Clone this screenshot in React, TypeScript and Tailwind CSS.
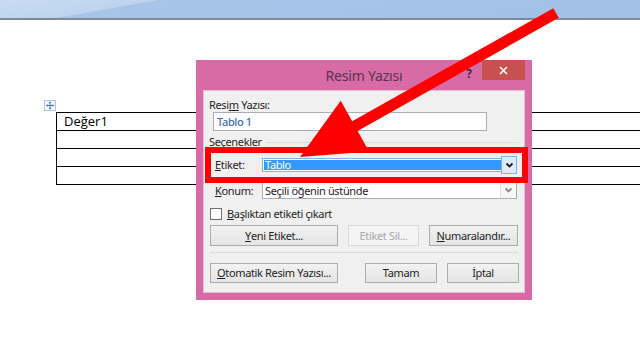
import React from "react";

const Btn = ({
  children,
  w,
  disabled,
  className = "",
}: {
  children: React.ReactNode;
  w: string;
  disabled?: boolean;
  className?: string;
}) => (
  <div
    className={`${w} ${className} flex h-full items-center justify-center border text-[11px] ${
      disabled
        ? "border-[#d9d9d9] bg-[#f4f4f4] text-[#a6a6a6]"
        : "border-[#acacac] bg-[linear-gradient(#f2f2f2,#e4e4e4)] text-[#1e1e1e]"
    }`}
  >
    {children}
  </div>
);

const Chevron = ({ color }: { color: string }) => (
  <svg width="9" height="7" viewBox="0 0 9 7">
    <polyline points="1.5,1.5 4.5,4.5 7.5,1.5" fill="none" stroke={color} strokeWidth="1.8" />
  </svg>
);

const MoveIcon = () => (
  <svg width="12" height="11" viewBox="0 0 12 11" className="block">
    <rect x="0.5" y="0.5" width="11" height="10" fill="#f4f7fb" stroke="#b9c4d2" />
    <path d="M6 2v7M2.5 5.5h7" stroke="#3f78c9" strokeWidth="1" />
    <path d="M6 1.5l-1.5 1.5h3zM6 9.5l-1.5-1.5h3zM2 5.5l1.5-1.5v3zM10 5.5l-1.5-1.5v3z" fill="#3f78c9" />
  </svg>
);

const DocumentTable = () => (
  <div className="pl-[44px] pt-[80px]">
    <MoveIcon />
    <div className="ml-[12px] mt-px border-l border-t border-black font-['Open_Sans',sans-serif]">
      <div className="flex h-[18px] items-center border-b border-black pl-[7px] text-[13px] text-black">
        Değer1
      </div>
      <div className="h-[18px] border-b border-black" />
      <div className="h-[18px] border-b border-black" />
      <div className="h-[18px] border-b border-black" />
    </div>
  </div>
);

const Dialog = () => (
  <div className="absolute left-[196px] top-[60px] flex h-[240px] w-[336px] flex-col bg-[#d86ba5] font-['Noto_Sans',sans-serif]">
    <div className="grid h-[30px] grid-cols-[1fr_auto_1fr]">
      <div />
      <div className="flex items-center text-[14px] tracking-[-0.2px] text-[#56354f]">Resim Yazısı</div>
      <div className="flex justify-end">
        <span className="mr-[10px] mt-[6px] text-[12px] font-bold leading-[16px] text-[#3e2a3b]">?</span>
        <div className="mr-[7px] flex h-[20px] w-[43px] items-center justify-center bg-[#c75050]">
          <svg width="9" height="9" viewBox="0 0 9 9">
            <path d="M1 1l7 7M8 1l-7 7" stroke="#fff" strokeWidth="1.6" />
          </svg>
        </div>
      </div>
    </div>
    <div className="mx-[7px] flex h-[203px] flex-col border border-[#e9bfd6] bg-[#f0f0f0] pl-[5px] text-[11px] leading-[14px] tracking-[-0.35px] text-[#1e1e1e]">
      <div className="mt-[7px]">
        Resi<u>m</u> Yazısı:
      </div>
      <div className="ml-[4px] flex h-[19px] w-[274px] items-center border border-[#abadb3] bg-white pl-[3px] font-medium text-[#3d6db2]">
        Tablo 1
      </div>
      <div className="mt-[4px] flex items-center">
        <span>Seçenekler</span>
        <div className="ml-[4px] mr-[5px] h-px flex-1 bg-[#dcdcdc]" />
      </div>
      <div className="mt-[7px] flex h-[18px] items-center">
        <span className="w-[53px] pl-[6px]">
          <u>E</u>tiket:
        </span>
        <div className="flex h-full w-[255px] items-stretch">
          <div className="my-[2px] flex flex-1 items-stretch border border-r-0 border-[#7eb4ea] bg-white py-px pl-px">
            <div className="flex flex-1 items-center bg-[#3399ff] pl-[1px] text-white">Tablo</div>
          </div>
          <div className="flex w-[16px] items-center justify-center border border-[#7eb4ea] bg-[#dcecfc]">
            <Chevron color="#1b1b1b" />
          </div>
        </div>
      </div>
      <div className="mt-[8px] flex h-[17px] items-center">
        <span className="w-[53px] pl-[6px]">
          <u>K</u>onum:
        </span>
        <div className="flex h-full w-[255px] items-stretch border border-[#abadb3] bg-white">
          <div className="flex flex-1 items-center pl-[2px]">Seçili öğenin üstünde</div>
          <div className="flex w-[16px] items-center justify-center border-l border-[#e3e3e3] bg-[#f7f7f7]">
            <Chevron color="#8a8a8a" />
          </div>
        </div>
      </div>
      <div className="ml-[1px] mt-[9px] flex h-[12px] items-center gap-[5px]">
        <div className="h-[12px] w-[12px] border border-[#707070] bg-white" />
        <span>
          <u>B</u>aşlıktan etiketi çıkart
        </span>
      </div>
      <div className="ml-[1px] mt-[5px] flex h-[21px] gap-[10px]">
        <Btn w="w-[128px]">
          <u>Y</u>eni Etiket...
        </Btn>
        <Btn w="w-[71px]" disabled>
          Etiket Sil...
        </Btn>
        <Btn w="w-[89px]">
          <u>N</u>umaralandır...
        </Btn>
      </div>
      <div className="ml-[1px] mr-[6px] mt-[6px] h-px bg-[#dadada]" />
      <div className="ml-[1px] mt-[10px] flex h-[20px]">
        <Btn w="w-[128px]">
          <u>O</u>tomatik Resim Yazısı...
        </Btn>
        <Btn w="w-[72px]" className="ml-[27px]">
          Tamam
        </Btn>
        <Btn w="w-[72px]" className="ml-[10px]">
          İptal
        </Btn>
      </div>
    </div>
  </div>
);

const Overlay = () => (
  <>
    <div className="pointer-events-none absolute left-[205px] top-[147px] h-[36px] w-[323px] border-[6px] border-[#ff0000]" />
    <svg
      className="pointer-events-none absolute left-0 top-0"
      width="640"
      height="362"
      viewBox="0 0 640 362"
    >
      <polygon
        points="553.3,8.2 352.2,121.3 340.7,100.8 300,157 369.1,151.4 357.6,130.9 558.7,17.8"
        fill="#ff0000"
      />
    </svg>
  </>
);

export default function App() {
  return (
    <div className="relative h-[362px] w-[640px] overflow-hidden bg-white">
      <div className="h-[20px] border-b-2 border-[#7d8b9a] bg-[linear-gradient(170deg,#c8dbf2_0px,#bed4ef_27px,#a8c4e9_28px,#a2c0e7_100%)]" />
      <DocumentTable />
      <Dialog />
      <Overlay />
    </div>
  );
}
